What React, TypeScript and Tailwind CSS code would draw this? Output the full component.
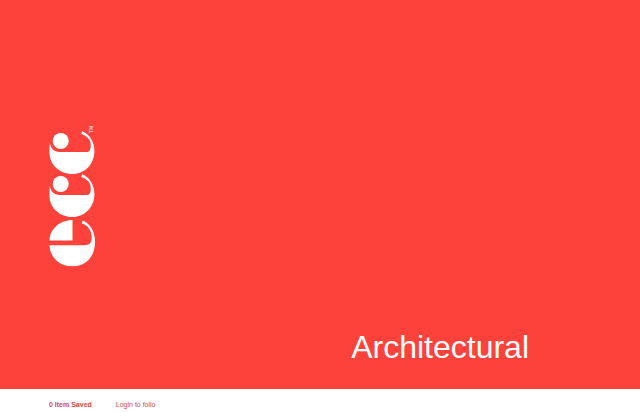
function EccLogo() {
  return (
    <svg viewBox="0 0 48 144" className="h-36 w-12" role="img" aria-label="ecc" fill="#fff">
      <g id="upper-c">
        <circle cx="11.700" cy="16" r="8" />
        <path d="M.8 17.500 C1.800 23.500 5 27 10.500 27 H37 C40.500 27 41.700 25 41.700 21.500 V19.500 C41.700 14.500 38 11 32.300 9 L33 6.300 C40.500 9 45.400 17 45.400 26 C45.400 39 36 49 23.200 49 C10.500 49 .4 39.500 .4 27 C.4 24 .5 21 .8 17.500 Z" />
      </g>
      <use href="#upper-c" y="43" />
      <path d="M23.500 95 V115.500 H.5 C.5 104 11 95 23.500 95 Z" />
      <path d="M.5 120.200 H35 C40.500 120.200 42.700 118 42.700 112.500 C42.700 105.500 39 100.300 32.800 98.500 L33.500 95.600 C41.500 98.500 46 107 46 117 C46 131.500 37 141.300 23.500 141.300 C10.500 141.300 1 132.500 .5 120.200 Z" />
      <text
        transform="translate(44 8) rotate(-90)"
        fontFamily="'Liberation Sans', sans-serif"
        fontSize="5"
      >
        TM
      </text>
    </svg>
  );
}

export default function App() {
  return (
    <div className="flex min-h-screen flex-col bg-white font-['Liberation_Sans',Arial,sans-serif]">
      <main className="flex flex-1 justify-between bg-[#fc423b] pr-[111px] pb-5 pl-[49px]">
        <a href="#home" className="mt-[125px] self-start">
          <EccLogo />
        </a>
        <h1 className="self-end text-[32px] leading-11 font-light text-white">
          Architectural
        </h1>
      </main>
      <footer className="flex h-[23px] items-end gap-6 px-[49px] text-[7px] leading-[14px] text-[#d94b45]">
        <a href="#saved" className="font-bold">
          0 Item Saved
        </a>
        <a href="#login">Login to folio</a>
      </footer>
    </div>
  );
}
